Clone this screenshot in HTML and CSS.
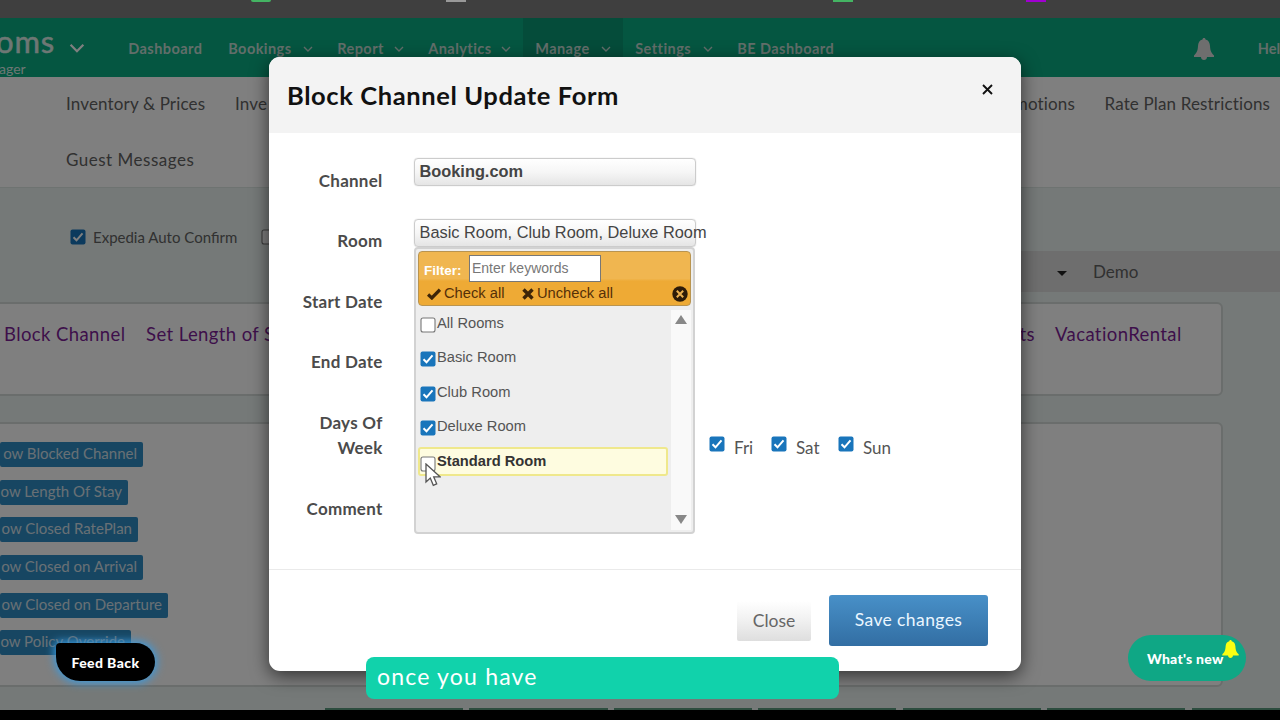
FILE: index.html
```
<!DOCTYPE html>
<html lang="en">
<head>
  <meta charset="UTF-8">
  <title>Block Channel Update Form</title>
  <link rel="stylesheet" href="styles.css">
</head>
<body>

  <svg width="0" height="0" class="sprite">
    <symbol id="chevron" viewBox="0 0 10 6"><path d="M1 1l4 4 4-4" fill="none" stroke="currentColor" stroke-width="1.4"/></symbol>
    <symbol id="check-on" viewBox="0 0 16 16"><rect x=".5" y=".5" width="15" height="15" rx="2" fill="#1975bb"/><path d="M3.5 8.3l3 3 6-7" fill="none" stroke="#fff" stroke-width="2"/></symbol>
    <symbol id="check-off" viewBox="0 0 16 16"><rect x="1" y="1" width="14" height="14" rx="2" fill="#fff" stroke="#777" stroke-width="1.1"/></symbol>
    <symbol id="bell" viewBox="0 0 20 22"><path d="M10 0c1 0 1.500.7 1.500 1.600C14.500 2.300 15.800 4.800 16 8c.3 5 1.200 6.700 4 9.500V19H0v-1.500C2.800 14.700 3.700 13 4 8c.2-3.200 1.500-5.700 4.500-6.400C8.500.7 9 0 10 0zM7 19h6c0 1.700-1.300 3-3 3s-3-1.300-3-3z" fill="currentColor"/></symbol>
  </svg>

  <div class="browser-bar">
    <span class="fav fav-1"></span>
    <span class="fav fav-2"></span>
    <span class="fav fav-3"></span>
    <span class="fav fav-4"></span>
  </div>

  <div class="page">
    <div class="topbar">
      <div class="brand">
        <div class="brand-name">oms</div>
        <div class="brand-sub">ager</div>
      </div>
      <svg class="brand-arrow"><use href="#chevron"/></svg>
      <div class="nav">
        <a class="nav-dashboard">Dashboard</a>
        <a class="nav-bookings">Bookings <svg><use href="#chevron"/></svg></a>
        <a class="nav-report">Report <svg><use href="#chevron"/></svg></a>
        <a class="nav-analytics">Analytics <svg><use href="#chevron"/></svg></a>
        <a class="nav-manage active">Manage <svg><use href="#chevron"/></svg></a>
        <a class="nav-settings">Settings <svg><use href="#chevron"/></svg></a>
        <a class="nav-be">BE Dashboard</a>
      </div>
      <svg class="topbar-bell"><use href="#bell"/></svg>
      <a class="help">Hel</a>
    </div>

    <div class="subnav">
      <div class="subnav-row">
        <a>Inventory &amp; Prices</a>
        <a class="inve">Inve</a>
        <a class="promotions">motions</a>
        <a class="restrictions">Rate Plan Restrictions</a>
      </div>
      <div class="subnav-row messages">
        <a>Guest Messages</a>
      </div>
    </div>

    <div class="options">
      <svg class="box"><use href="#check-on"/></svg>
      <span>Expedia Auto Confirm</span>
      <svg class="box box-next"><use href="#check-off"/></svg>
    </div>

    <div class="account">
      <span class="caret"></span>
      <span>Demo</span>
    </div>

    <div class="card links">
      <a class="link-block">Block Channel</a>
      <a class="link-stay">Set Length of S</a>
      <a class="link-events">ts</a>
      <a class="link-rental">VacationRental</a>
    </div>

    <div class="card actions">
      <a class="show-btn w1">ow Blocked Channel</a>
      <a class="show-btn w2">ow Length Of Stay</a>
      <a class="show-btn w3">ow Closed RatePlan</a>
      <a class="show-btn w4">ow Closed on Arrival</a>
      <a class="show-btn w5">ow Closed on Departure</a>
      <a class="show-btn w6">ow Policy Override</a>
    </div>

    <div class="tiles"></div>
    <div class="backdrop"></div>
  </div>
  <div class="bottom-bar"></div>

  <div class="modal">
    <div class="modal-header">
      <h2>Block Channel Update Form</h2>
      <svg class="close-x" viewBox="0 0 11 11"><path d="M1 1l9 9M10 1l-9 9" stroke="#111" stroke-width="1.900"/></svg>
    </div>

    <div class="modal-body">
      <div class="form-row">
        <label>Channel</label>
        <div class="select select-channel">Booking.com</div>
      </div>
      <div class="form-row">
        <label>Room</label>
        <div class="room-field">
          <div class="select">Basic Room, Club Room, Deluxe Room</div>
          <div class="multiselect">
            <div class="ms-header">
              <div class="ms-filter">
                <b>Filter:</b>
                <span class="ms-input">Enter keywords</span>
              </div>
              <div class="ms-tools">
                <svg class="ms-tick" viewBox="0 0 13 11"><path d="M1 6l3.500 3.200L12 1.500" fill="none" stroke="#3d2508" stroke-width="3"/></svg>
                <span class="ms-check">Check all</span>
                <svg class="ms-cross" viewBox="0 0 12 12"><path d="M1.500 1.500l9 9M10.500 1.500l-9 9" stroke="#3d2508" stroke-width="3.400"/></svg>
                <span class="ms-uncheck">Uncheck all</span>
                <svg class="ms-close" viewBox="0 0 16 16"><circle cx="8" cy="8" r="7.700" fill="#2d1b08"/><path d="M4.800 4.800l6.400 6.400M11.200 4.800l-6.400 6.400" stroke="#eab050" stroke-width="2"/></svg>
              </div>
            </div>
            <div class="ms-body">
              <div class="ms-list">
                <div class="ms-item"><svg><use href="#check-off"/></svg>All Rooms</div>
                <div class="ms-item"><svg><use href="#check-on"/></svg>Basic Room</div>
                <div class="ms-item"><svg><use href="#check-on"/></svg>Club Room</div>
                <div class="ms-item"><svg><use href="#check-on"/></svg>Deluxe Room</div>
                <div class="ms-item hover"><svg><use href="#check-off"/></svg>Standard Room</div>
              </div>
              <div class="ms-scroll">
                <svg viewBox="0 0 12 9"><path d="M6 0l6 9H0z" fill="#888"/></svg>
                <svg viewBox="0 0 12 9"><path d="M0 0h12L6 9z" fill="#888"/></svg>
              </div>
            </div>
          </div>
        </div>
      </div>
      <div class="form-row"><label>Start Date</label></div>
      <div class="form-row"><label>End Date</label></div>
      <div class="form-row days">
        <label>Days Of Week</label>
        <div class="day-list">
          <span class="day-fri"><svg><use href="#check-on"/></svg>Fri</span>
          <span class="day-sat"><svg><use href="#check-on"/></svg>Sat</span>
          <span><svg><use href="#check-on"/></svg>Sun</span>
        </div>
      </div>
      <div class="form-row"><label>Comment</label></div>
    </div>

    <div class="modal-footer">
      <button class="btn-close">Close</button>
      <button class="btn-save">Save changes</button>
    </div>
  </div>

  <svg class="cursor" viewBox="0 0 16 24"><path d="M1 1v18l4.300-4 3 7.300 3.400-1.500-3-7H15z" fill="#fff" stroke="#555" stroke-width="1.300"/></svg>

  <div class="feedback">Feed Back</div>
  <div class="whats-new">What's new <svg><use href="#bell"/></svg></div>
  <div class="caption">once you have</div>

</body>
</html>
```
FILE: styles.css
```
* {
  box-sizing: border-box;
}

body {
  margin: 0;
  width: 1280px;
  height: 720px;
  overflow: hidden;
  position: relative;
  background: #000;
  font-family: Lato, sans-serif;
  color: #444;
}

.sprite {
  position: absolute;
}

a, span, label, button, h2 {
  white-space: nowrap;
}

/* browser tab strip */
.browser-bar {
  height: 18px;
  background: #3f3f3f;
  display: flex;
  padding-left: 251px;
}

.fav {
  height: 2px;
  width: 20px;
}

.fav-1 { background: #44b463; border-radius: 0 0 10px 10px; margin-right: 175px; }
.fav-2 { background: #999; margin-right: 367px; }
.fav-3 { background: #44b463; margin-right: 173px; }
.fav-4 { background: #a000d0; }

.page {
  position: relative;
  height: 692px;
  background: #eaf3f0;
  overflow: hidden;
}

.backdrop {
  position: absolute;
  inset: 0;
  background: rgba(0, 0, 0, 0.5);
}

.topbar {
  height: 59px;
  background: #0aac82;
  color: #fff;
  display: flex;
  align-items: stretch;
}

.brand {
  width: 69px;
  color: #dceee8;
}

.brand-name {
  font-size: 31px;
  line-height: 36px;
  height: 40px;
  margin: 5px 0 0 -4px;
  letter-spacing: 0.8px;
  -webkit-text-stroke: 0.5px #dceee8;
}

.brand-sub {
  font-size: 14px;
  line-height: 14px;
  margin: -1px 0 0 -1px;
}

.brand-arrow {
  width: 16px;
  height: 10px;
  margin: 25px 31px 0 0;
}

.nav {
  display: flex;
  flex: none;
  width: 1078px;
}

.nav a {
  display: flex;
  justify-content: space-between;
  padding: 22px 12px 0 12.500px;
  font-size: 14.500px;
  line-height: 18px;
  letter-spacing: 0.45px;
  font-weight: 700;
  color: #c4dcd4;
}

.nav svg {
  width: 10px;
  height: 6px;
  margin-top: 6px;
}

.nav .nav-dashboard { width: 100px; }
.nav .nav-bookings { width: 109px; }
.nav .nav-report { width: 91px; }
.nav .nav-analytics { width: 107px; }
.nav .nav-manage { width: 100px; }
.nav .nav-settings { width: 102px; }

.nav .active {
  background: #0a9874;
}

.topbar-bell {
  width: 20px;
  height: 22px;
  color: #ddd;
  margin: 20px 44px 0 0;
  flex: none;
}

.help {
  font-size: 14.500px;
  line-height: 18px;
  font-weight: 700;
  padding-top: 22px;
  color: #c4dcd4;
}

.subnav {
  height: 111px;
  background: #fff;
  border-bottom: 1px solid #dde6e3;
  color: #626262;
  font-size: 17px;
  letter-spacing: 0.15px;
}

.subnav-row {
  display: flex;
  padding-left: 66px;
  height: 55px;
  line-height: 54px;
}

.subnav-row a:first-child { width: 169px; }
.subnav-row .inve { width: 754px; }
.subnav-row .promotions { width: 86px; text-align: right; }
.subnav-row .restrictions { margin-left: 29.500px; }

.messages {
  letter-spacing: 0.5px;
  line-height: 56px;
}

.options {
  height: 63px;
  padding: 41px 0 0 70px;
  display: flex;
  font-size: 15px;
  line-height: 17px;
  color: #626262;
}

.options .box {
  width: 16px;
  height: 16px;
  margin-right: 7px;
}

.options .box-next {
  margin-left: 24px;
}

.account {
  height: 41px;
  margin-left: 600px;
  background: #dcdcdc;
  display: flex;
  align-items: center;
  padding-left: 457px;
  font-size: 17px;
  color: #626262;
}

.account .caret {
  border: 5px solid transparent;
  border-top-color: #222;
  border-bottom: 0;
  margin: 4px 26px 0 0;
}

.card {
  width: 1243px;
  margin-left: -20px;
  background: #fff;
  border: 2px solid #d4dad8;
  border-radius: 6px;
}

.links {
  margin-top: 10px;
  height: 94px;
  padding: 19px 0 0 22px;
  display: flex;
  font-size: 18.5px;
  line-height: 22px;
  letter-spacing: 0.4px;
  color: #7d1f96;
}

.link-block { width: 142px; }
.link-stay { width: 769px; }
.link-events { width: 120px; text-align: right; }
.link-rental { margin-left: 20px; }

.actions {
  margin-top: 26px;
  height: 265px;
  padding: 18px 0 0 18px;
  display: flex;
  flex-direction: column;
  gap: 12.700px;
}

.show-btn {
  height: 25px;
  line-height: 22px;
  border-radius: 2px;
  background: #2f8cc4;
  color: #d2e0ea;
  font-size: 15px;
  text-align: right;
  padding-right: 6px;
}

.w1 { width: 143px; }
.w2 { width: 128px; }
.w3 { width: 138px; }
.w4 { width: 143px; }
.w5 { width: 168px; }
.w6 { width: 131px; }

/* tops of the tiles cut off by the page bottom */
.tiles {
  height: 2px;
  margin: 21px 0 0 325px;
  background: repeating-linear-gradient(90deg, #5a9a7e 0 138px, #eaf3f0 138px 144.500px);
}

.bottom-bar {
  height: 10px;
  background: #000;
}

/* modal */
.modal {
  position: absolute;
  left: 269px;
  top: 57px;
  width: 752px;
  height: 614px;
  background: #fff;
  border-radius: 11px;
  box-shadow: 0 5px 18px rgba(0, 0, 0, 0.6);
}

.modal-header {
  height: 76px;
  background: #f3f3f3;
  border-radius: 11px 11px 0 0;
  display: flex;
  justify-content: space-between;
  padding: 21px 28px 0 18px;
}

.modal-header h2 {
  margin: 0;
  font-size: 25.500px;
  line-height: 34px;
  letter-spacing: 0.6px;
  font-weight: 700;
  color: #111;
}

.close-x {
  width: 11px;
  height: 11px;
  margin-top: 6px;
}

.modal-body {
  height: 437px;
  padding-top: 25px;
  border-bottom: 1px solid #eaeaea;
}

.form-row {
  display: flex;
  height: 60.500px;
  padding-left: 20px;
}

.form-row label {
  width: 93.500px;
  margin-right: 31.500px;
  padding-top: 9.500px;
  text-align: right;
  font-size: 17px;
  line-height: 25px;
  letter-spacing: 0.25px;
  font-weight: 700;
  color: #4b4b4b;
  white-space: normal;
}

.form-row.days {
  height: 86px;
}

.select {
  width: 282px;
  height: 28px;
  border: 1px solid #ccc;
  border-radius: 4px;
  background: linear-gradient(#fff, #f6f6f6 50%, #e5e5e5);
  box-shadow: 0 0 1px #bbb;
  padding-left: 4.500px;
  font: 16.350px/25px "Liberation Sans", Arial, sans-serif;
  white-space: nowrap;
  color: #444;
}

.select-channel {
  font-weight: bold;
}

.room-field {
  position: relative;
}

.multiselect {
  position: absolute;
  top: 28px;
  left: 0;
  width: 281px;
  height: 287px;
  border: 2px solid #d2d2d2;
  border-radius: 4px;
  background: #eee;
  padding: 2px;
  font: 14.700px "Liberation Sans", Arial, sans-serif;
  color: #555;
}

.ms-header {
  height: 55px;
  border: 1px solid #b99450;
  border-radius: 4px;
  background: linear-gradient(#f0b650, #f0b650 50%, #eeaa35 55%);
  padding: 3px 2px 0 5px;
}

.ms-filter {
  display: flex;
  height: 27px;
}

.ms-filter b {
  width: 45px;
  line-height: 31px;
  font-size: 13.500px;
  color: #fff;
}

.ms-input {
  width: 132px;
  height: 27px;
  background: #fff;
  border: 1px solid #777;
  padding-left: 2px;
  line-height: 24px;
  font-size: 14px;
  color: #777;
}

.ms-tools {
  display: flex;
  align-items: center;
  height: 22px;
  color: #553008;
}

.ms-tick {
  width: 14px;
  height: 12px;
  margin: 3px 3px 0 3px;
}

.ms-check {
  width: 78px;
}

.ms-cross {
  width: 12px;
  height: 12px;
  margin: 3px 3px 0 0;
}

.ms-close {
  width: 16px;
  height: 16px;
  margin: 2px 0 0 auto;
}

.ms-body {
  display: flex;
  justify-content: space-between;
}

.ms-list {
  width: 250px;
  padding-top: 3px;
}

.ms-item {
  display: flex;
  height: 29px;
  margin-bottom: 5.500px;
  border: 1px solid transparent;
  border-radius: 3px;
  line-height: 26px;
}

.ms-item svg {
  width: 16px;
  height: 16px;
  margin: 7px 1px 0 1px;
}

.ms-item.hover {
  background: #fefce0;
  border: 2px solid #efe88c;
  line-height: 25px;
  font-weight: bold;
  color: #333;
}

.ms-item.hover svg {
  margin: 7px 1px 0 0;
}

.ms-scroll {
  width: 20px;
  height: 220px;
  margin-top: 4px;
  background: #f9f9f9;
  display: flex;
  flex-direction: column;
  justify-content: space-between;
  align-items: center;
  padding: 5px 0 6px;
}

.ms-scroll svg {
  width: 12px;
  height: 9px;
}

.day-list {
  display: flex;
  padding: 35px 0 0 294px;
  font-size: 17px;
  line-height: 26px;
  color: #555;
}

.day-list span {
  display: flex;
  width: 67px;
}

.day-list .day-fri {
  width: 62px;
}

.day-list svg {
  width: 16px;
  height: 16px;
  margin: 1px 9px 0 1px;
}

.modal-footer {
  display: flex;
  justify-content: flex-end;
  gap: 18px;
  padding: 25px 33px 0 0;
}

.modal-footer button {
  font-family: inherit;
  font-size: 17.500px;
  border: 0;
  padding: 0 0 2px;
}

.btn-close {
  width: 74px;
  height: 40px;
  margin-top: 6px;
  color: #666;
  background: linear-gradient(#fff, #f0f0f0 50%, #dedede);
  border-radius: 2px;
}

.modal-footer .btn-save {
  width: 159px;
  height: 51px;
  letter-spacing: 0.4px;
  color: #eaf6ff;
  background: linear-gradient(#4890c8, #326ea3);
  border-radius: 3px;
}

/* floating bits */
.cursor {
  position: absolute;
  left: 425px;
  top: 463px;
  width: 16px;
  height: 24px;
  z-index: 3;
}

.feedback {
  position: absolute;
  left: 56px;
  top: 643px;
  width: 99px;
  height: 38px;
  background: #000;
  border-radius: 4px 19px 19px 24px;
  box-shadow: 0 0 9px 2px #3a9ade;
  color: #fff;
  font-size: 14px;
  letter-spacing: 0.4px;
  font-weight: 900;
  line-height: 39px;
  text-align: center;
}

.whats-new {
  position: absolute;
  left: 1128px;
  top: 635px;
  width: 118px;
  height: 46px;
  background: #0fa785;
  border-radius: 23px;
  color: #fff;
  font-size: 14px;
  letter-spacing: 0.25px;
  font-weight: 900;
  line-height: 48px;
  padding-left: 19px;
}

.whats-new svg {
  position: absolute;
  left: 94px;
  top: 5px;
  width: 17px;
  height: 18px;
  color: #fbff12;
}

.caption {
  position: absolute;
  left: 366px;
  top: 657px;
  width: 473px;
  height: 42px;
  background: #11d2ab;
  border-radius: 8px;
  color: #fff;
  font-size: 23px;
  line-height: 39px;
  letter-spacing: 1.200px;
  padding-left: 11px;
}
```
